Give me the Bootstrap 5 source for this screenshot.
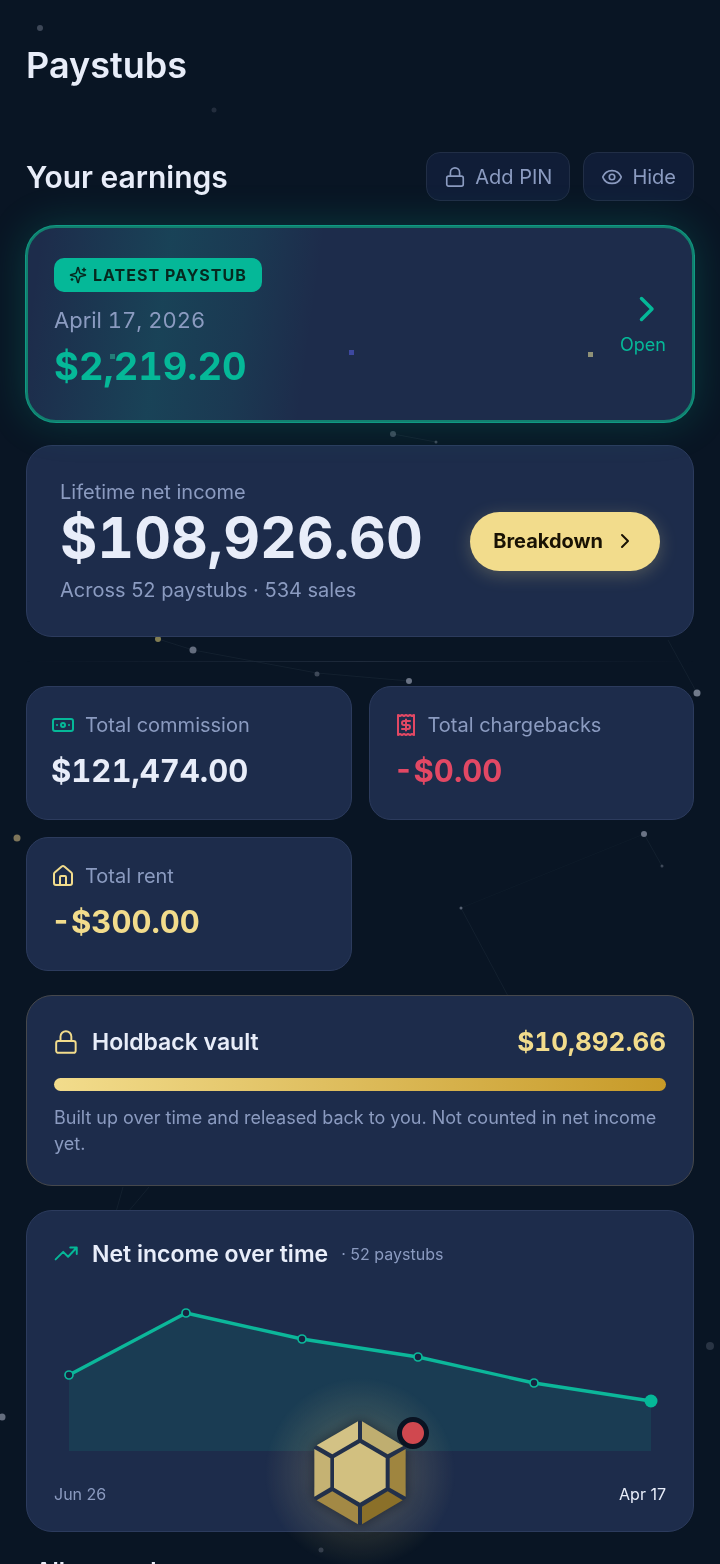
<!DOCTYPE html>
<html lang="en">
<head>
<meta charset="utf-8">
<meta name="viewport" content="width=device-width, initial-scale=1">
<title>Paystubs</title>
<link href="https://cdn.jsdelivr.net/npm/bootstrap@5.3.0/dist/css/bootstrap.min.css" rel="stylesheet">
<style>
  :root {
    --ink: #e8edf9;
    --muted: #8b9bc0;
    --teal: #05b898;
    --gold: #f2dc8c;
    --red: #e24864;
    --panel: #1d2c4b;
    --edge: #2c3b5d;
  }
  body {
    background: #091524;
    color: var(--ink);
    font-family: Inter, "Liberation Sans", sans-serif;
    font-size: 20px;
    line-height: 30px;
  }
  .stars { inset: 0; width: 100%; height: 100%; }
  .screen { height: 100vh; overflow-y: auto; scrollbar-width: none; }
  .screen::-webkit-scrollbar { display: none; }
  .page-pad { padding: 41px 26px 0; }
  .icon { fill: none; stroke: currentColor; stroke-width: 2; stroke-linecap: round; stroke-linejoin: round; flex: none; }
  .i-18 { width: 18px; height: 18px; }
  .i-22 { width: 22px; height: 22px; }
  .i-24 { width: 24px; height: 24px; }
  .i-26 { width: 26px; height: 26px; stroke-width: 1.8; }
  .i-42 { width: 42px; height: 42px; }
  .money { font-weight: 700; font-variant-numeric: tabular-nums; }
  .muted { color: var(--muted); }
  .teal { color: var(--teal); }
  .gold { color: var(--gold); }
  .red { color: var(--red); }

  .page-title { font-size: 36px; line-height: 48px; font-weight: 600; margin-bottom: 63px; }
  .section-head { margin-bottom: 25px; }
  .section-title { font-size: 30px; line-height: 40px; font-weight: 600; }
  .tools { gap: 13px; }
  .tool {
    display: flex; align-items: center; gap: 9px; height: 49px; padding: 0 17px;
    border: 1px solid #212e46; border-radius: 14px; background: #101d37; color: var(--muted);
    font-size: 20px; line-height: 30px;
  }
  .tool .icon { stroke-width: 1.8; }

  .panel { background: var(--panel); border: 1px solid var(--edge); border-radius: 26px; color: var(--ink); }
  .latest {
    display: flex; align-items: center; justify-content: space-between; text-decoration: none;
    padding: 30px 26px; margin-bottom: 23px; border: 2px solid #12806f; border-radius: 30px;
    background: linear-gradient(98deg, rgba(5,184,152,0) 2%, rgba(5,184,152,.16) 21%, rgba(5,184,152,.09) 33%, rgba(5,184,152,0) 43%) var(--panel);
    box-shadow: 0 0 0 1px #0f9a83, 0 0 40px rgba(5,184,152,.24);
  }
  .tag {
    display: inline-flex; align-items: center; gap: 6px; height: 34px; padding: 0 15px;
    border-radius: 10px; background: var(--teal); color: #06291f;
    font-size: 16px; line-height: 24px; font-weight: 700; letter-spacing: 1px;
  }
  .date { font-size: 22px; margin-top: 13px; font-variant-numeric: tabular-nums; }
  .latest-sum { font-size: 38px; line-height: 48px; margin-top: 7px; }
  .open-label { font-size: 18px; }
  .lifetime { padding: 31px 33px; }
  .lifetime-sum { font-size: 57px; line-height: 62px; margin-bottom: 6px; }
  .breakdown {
    display: flex; align-items: center; gap: 10px; height: 59px; padding: 0 23px;
    border: 0; border-radius: 30px; background: var(--gold); color: #191204;
    font-size: 20px; line-height: 30px; font-weight: 700; box-shadow: 0 4px 18px rgba(242,220,140,.24);
  }
  .rule { height: 1px; background: linear-gradient(90deg, transparent, #1e2a3b 50%, transparent); }
  .stats { display: grid; grid-template-columns: 1fr 1fr; gap: 17px; }
  .stat { border-radius: 22px; padding: 23px 24px 28px; }
  .stat-name { gap: 10px; }
  .stat-sum { font-size: 31px; line-height: 40px; margin-top: 11px; }
  .vault { border-color: #46484c; padding: 25px 27px 28px; }
  .panel-title { font-size: 23px; line-height: 36px; font-weight: 600; margin: 0; }
  .vault-sum { font-size: 26px; line-height: 42px; }
  .meter { height: 13px; border-radius: 7px; background: #17233f; margin-top: 15px; }
  .meter-fill { height: 13px; border-radius: 7px; background: linear-gradient(90deg, #f2dc8c, #c79a28); }
  .note { font-size: 18px; line-height: 26px; margin: 14px 0 0; }
  .trend { padding: 25px 27px; }
  .trend-count { margin-left: 13px; }
  .fine { font-size: 16px; line-height: 24px; }
  .trend-svg { display: block; width: 100%; margin: 14px 0 16px; overflow: visible; }
  .list-title { font-size: 24px; line-height: 36px; font-weight: 600; margin: 22px 9px 80px; }
  .gem { bottom: 35px; left: 50%; margin-left: -50px; width: 100px; height: 112px; padding: 0; border: 0; background: none; }
  .gem::before { content: ""; position: absolute; inset: -40px -46px; background: radial-gradient(closest-side, rgba(242,220,140,.26) 30%, rgba(242,220,140,.1) 65%, rgba(242,220,140,0)); }
  .gem svg { position: relative; display: block; width: 100px; height: 112px; filter: drop-shadow(0 0 7px rgba(8,16,34,.7)); }
  .gem-dot { position: absolute; top: 0; right: -19px; width: 32px; height: 32px; border: 5px solid #0a1322; border-radius: 50%; background: #d0484f; }
</style>
</head>
<body>
<svg class="stars position-fixed" viewBox="0 0 720 1564" preserveAspectRatio="xMidYMin slice" aria-hidden="true">
  <g stroke="#7d8ea0" stroke-opacity=".09" fill="none">
    <path d="M158 639 193 650 317 673 409 681M393 434 436 442M668 640 697 693M644 834 662 866M461 908 508 996M149 1187 128 1212M123 1187 116 1212"/>
    <path d="M461 908 644 834" stroke-opacity=".04"/>
  </g>
  <g fill="#8b93a5">
    <circle cx="40" cy="28" r="3" opacity=".4"/><circle cx="214" cy="110" r="2.500" opacity=".2"/>
    <circle cx="393" cy="434" r="3" opacity=".4"/><circle cx="436" cy="442" r="1.500" opacity=".4"/>
    <circle cx="193" cy="650" r="3.500" opacity=".7"/><circle cx="317" cy="674" r="2.500" opacity=".4"/>
    <circle cx="409" cy="681" r="3" opacity=".75"/><circle cx="697" cy="693" r="3.500" opacity=".8"/>
    <circle cx="644" cy="834" r="3" opacity=".75"/><circle cx="662" cy="866" r="1.500" opacity=".4"/>
    <circle cx="461" cy="908" r="1.500" opacity=".6"/><circle cx="710" cy="1346" r="4" opacity=".25"/>
    <circle cx="2" cy="1417" r="3.500" opacity=".7"/><circle cx="321" cy="1550" r="2.500" opacity=".3"/>
    <circle cx="158" cy="639" r="3" fill="#b5a866" opacity=".7"/><circle cx="17" cy="838" r="3.500" fill="#a5966c" opacity=".75"/>
  </g>
</svg>

<div class="screen position-relative">
<main class="page-pad">
  <h1 class="page-title">Paystubs</h1>

  <div class="section-head d-flex align-items-center justify-content-between">
    <h2 class="section-title mb-0">Your earnings</h2>
    <div class="tools d-flex">
      <button type="button" class="tool"><svg class="icon i-22" viewBox="0 0 24 24" aria-hidden="true"><rect x="3" y="11" width="18" height="11" rx="2"/><path d="M7 11V7a5 5 0 0 1 10 0v4"/></svg>Add PIN</button>
      <button type="button" class="tool"><svg class="icon i-22" viewBox="0 0 24 24" aria-hidden="true"><path d="M2.062 12.348a1 1 0 0 1 0-.696 10.75 10.75 0 0 1 19.876 0 1 1 0 0 1 0 .696 10.75 10.75 0 0 1-19.876 0"/><circle cx="12" cy="12" r="3"/></svg>Hide</button>
    </div>
  </div>

  <a href="#latest" class="panel latest position-relative" id="latest">
    <div>
      <span class="tag"><svg class="icon i-18" viewBox="0 0 24 24" aria-hidden="true"><path d="M9.937 15.5A2 2 0 0 0 8.5 14.063l-6.135-1.582a.5.5 0 0 1 0-.962L8.5 9.936A2 2 0 0 0 9.937 8.5l1.582-6.135a.5.5 0 0 1 .963 0L14.063 8.5A2 2 0 0 0 15.5 9.937l6.135 1.581a.5.5 0 0 1 0 .964L15.5 14.063a2 2 0 0 0-1.437 1.437l-1.582 6.135a.5.5 0 0 1-.963 0zM20 3v4M22 5h-4M4 17v2M5 18H3"/></svg>LATEST PAYSTUB</span>
      <div class="date muted">April 17, 2026</div>
      <div class="latest-sum money teal">$2,219.20</div>
    </div>
    <div class="d-flex flex-column align-items-end teal">
      <svg class="icon i-42" viewBox="0 0 24 24" aria-hidden="true"><path d="m10 18 6-6-6-6"/></svg>
      <span class="open-label">Open</span>
    </div>
    <svg class="position-absolute top-0 start-0 w-100 h-100" viewBox="0 0 664 192" aria-hidden="true"><path fill="#3d48a0" d="M321 122h5v5h-5z"/><path fill="#8f9177" d="M560 124h5v5h-5z"/><path fill="#257d78" d="M82 126h5v5h-5z"/></svg>
  </a>

  <section class="panel lifetime d-flex align-items-center justify-content-between">
    <div>
      <div class="muted">Lifetime net income</div>
      <div class="lifetime-sum money">$108,926.60</div>
      <div class="muted">Across 52 paystubs · 534 sales</div>
    </div>
    <button type="button" class="breakdown">Breakdown<svg class="icon i-24" viewBox="0 0 24 24" aria-hidden="true"><path d="m9 18 6-6-6-6"/></svg></button>
  </section>

  <div class="rule my-4"></div>

  <div class="stats mb-4">
    <section class="panel stat">
      <div class="stat-name d-flex align-items-center"><svg class="icon i-24 teal" viewBox="0 0 24 24" aria-hidden="true"><rect x="2" y="6" width="20" height="12" rx="2"/><circle cx="12" cy="12" r="2"/><path d="M6 12h.01M18 12h.01"/></svg><span class="muted">Total commission</span></div>
      <div class="stat-sum money">$121,474.00</div>
    </section>
    <section class="panel stat">
      <div class="stat-name d-flex align-items-center"><svg class="icon i-24 red" viewBox="0 0 24 24" aria-hidden="true"><path d="M4 2v20l2-1 2 1 2-1 2 1 2-1 2 1 2-1 2 1V2l-2 1-2-1-2 1-2-1-2 1-2-1-2 1Z"/><path d="M16 8h-6a2 2 0 1 0 0 4h4a2 2 0 1 1 0 4H8M12 17.500v-11"/></svg><span class="muted">Total chargebacks</span></div>
      <div class="stat-sum money red">-$0.00</div>
    </section>
    <section class="panel stat">
      <div class="stat-name d-flex align-items-center"><svg class="icon i-24 gold" viewBox="0 0 24 24" aria-hidden="true"><path d="M15 21v-8a1 1 0 0 0-1-1h-4a1 1 0 0 0-1 1v8"/><path d="M3 10a2 2 0 0 1 .709-1.528l7-5.999a2 2 0 0 1 2.582 0l7 5.999A2 2 0 0 1 21 10v9a2 2 0 0 1-2 2H5a2 2 0 0 1-2-2z"/></svg><span class="muted">Total rent</span></div>
      <div class="stat-sum money gold">-$300.00</div>
    </section>
  </div>

  <section class="panel vault mb-4">
    <div class="d-flex align-items-center">
      <svg class="icon i-26 gold me-2" viewBox="0 0 24 24" aria-hidden="true"><rect x="2" y="11" width="18" height="11" rx="2"/><path d="M6 11V7a5 5 0 0 1 10 0v4"/></svg>
      <h3 class="panel-title ms-1">Holdback vault</h3>
      <div class="vault-sum money gold ms-auto">$10,892.66</div>
    </div>
    <div class="meter"><div class="meter-fill" style="width:100%"></div></div>
    <p class="note muted">Built up over time and released back to you. Not counted in net income yet.</p>
  </section>

  <section class="panel trend">
    <div class="d-flex align-items-center">
      <svg class="icon i-26 teal me-2" viewBox="0 0 24 24" aria-hidden="true"><path d="M21 6 13 14.500 8.500 10 1.500 17M15 6h6v6"/></svg>
      <h3 class="panel-title ms-1">Net income over time</h3>
      <span class="trend-count fine muted">· 52 paystubs</span>
    </div>
    <svg class="trend-svg" viewBox="0 0 612 180" role="img" aria-label="Net income over time">
      <path d="M15 89 132 27 248 53 364 71 480 97 597 115V165H15z" fill="#05b898" fill-opacity=".12"/>
      <path d="M15 89 132 27 248 53 364 71 480 97 597 115" fill="none" stroke="#0cb79a" stroke-width="3.400" stroke-linejoin="round"/>
      <g fill="#172340" stroke="#0cb79a" stroke-width="1.700"><circle cx="15" cy="89" r="4"/><circle cx="132" cy="27" r="4"/><circle cx="248" cy="53" r="4"/><circle cx="364" cy="71" r="4"/><circle cx="480" cy="97" r="4"/></g>
      <circle cx="597" cy="115" r="6.500" fill="#05b898"/>
    </svg>
    <div class="fine d-flex justify-content-between"><span class="muted">Jun 26</span><span>Apr 17</span></div>
  </section>

  <h2 class="list-title">All paystubs</h2>
</main>
</div>

<button type="button" class="gem position-fixed" aria-label="Menu">
  <svg viewBox="120 140 300 336" aria-hidden="true">
    <path d="M270 151 408 231V384L270 464 132 384V231z" fill="#22304a"/>
    <path d="M264 153V207L187 252 140 225z" fill="#d3c285"/>
    <path d="M276 153V207L353 252 400 227z" fill="#bfae70"/>
    <path d="M407 236V379L359 352V264z" fill="#9f853f"/>
    <path d="M398 390 276 462V409L353 363z" fill="#8b7029"/>
    <path d="M264 462V409L187 363 140 390z" fill="#a38945"/>
    <path d="M133 236 181 264V351L133 379z" fill="#c5b273"/>
    <path d="M270 218 347 263V352L270 397 192 352V263z" fill="#d2c080"/>
  </svg>
  <span class="gem-dot"></span>
</button>
<script src="https://cdn.jsdelivr.net/npm/bootstrap@5.3.0/dist/js/bootstrap.bundle.min.js"></script>
</body>
</html>
